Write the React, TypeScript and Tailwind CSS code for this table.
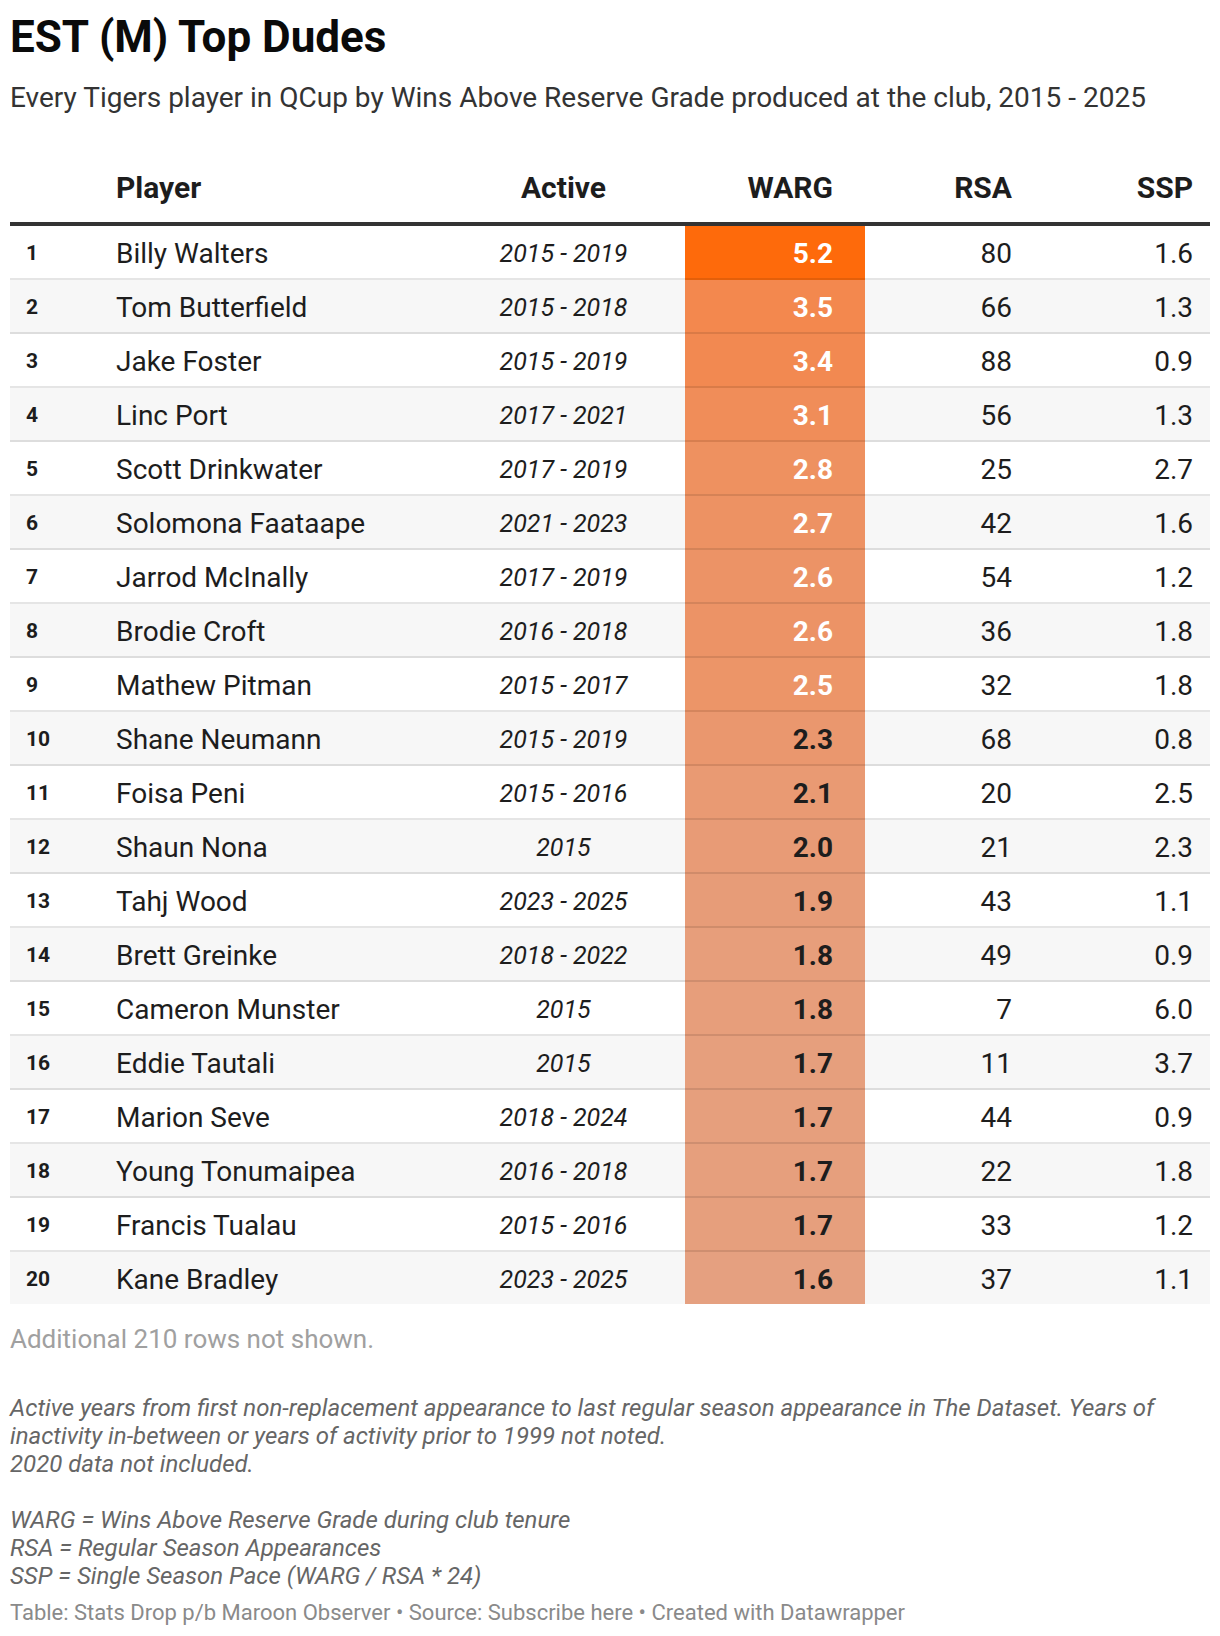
import React from "react";

type Row = {
  rank: number;
  name: string;
  active: string;
  warg: string;
  rsa: number;
  ssp: string;
  heat: string;
  light: boolean;
};

// Heat colours sampled from the reference, light text on the darker cells.
const ROWS: Row[] = [
  { rank: 1, name: "Billy Walters", active: "2015 - 2019", warg: "5.2", rsa: 80, ssp: "1.6", heat: "bg-[#fe6a0b]", light: true },
  { rank: 2, name: "Tom Butterfield", active: "2015 - 2018", warg: "3.5", rsa: 66, ssp: "1.3", heat: "bg-[#f3884e]", light: true },
  { rank: 3, name: "Jake Foster", active: "2015 - 2019", warg: "3.4", rsa: 88, ssp: "0.9", heat: "bg-[#f28951]", light: true },
  { rank: 4, name: "Linc Port", active: "2017 - 2021", warg: "3.1", rsa: 56, ssp: "1.3", heat: "bg-[#f08d59]", light: true },
  { rank: 5, name: "Scott Drinkwater", active: "2017 - 2019", warg: "2.8", rsa: 25, ssp: "2.7", heat: "bg-[#ee9160]", light: true },
  { rank: 6, name: "Solomona Faataape", active: "2021 - 2023", warg: "2.7", rsa: 42, ssp: "1.6", heat: "bg-[#ed9263]", light: true },
  { rank: 7, name: "Jarrod McInally", active: "2017 - 2019", warg: "2.6", rsa: 54, ssp: "1.2", heat: "bg-[#ec9366]", light: true },
  { rank: 8, name: "Brodie Croft", active: "2016 - 2018", warg: "2.6", rsa: 36, ssp: "1.8", heat: "bg-[#ec9366]", light: true },
  { rank: 9, name: "Mathew Pitman", active: "2015 - 2017", warg: "2.5", rsa: 32, ssp: "1.8", heat: "bg-[#ec9568]", light: true },
  { rank: 10, name: "Shane Neumann", active: "2015 - 2019", warg: "2.3", rsa: 68, ssp: "0.8", heat: "bg-[#ea976e]", light: false },
  { rank: 11, name: "Foisa Peni", active: "2015 - 2016", warg: "2.1", rsa: 20, ssp: "2.5", heat: "bg-[#e99a73]", light: false },
  { rank: 12, name: "Shaun Nona", active: "2015", warg: "2.0", rsa: 21, ssp: "2.3", heat: "bg-[#e89b76]", light: false },
  { rank: 13, name: "Tahj Wood", active: "2023 - 2025", warg: "1.9", rsa: 43, ssp: "1.1", heat: "bg-[#e79c78]", light: false },
  { rank: 14, name: "Brett Greinke", active: "2018 - 2022", warg: "1.8", rsa: 49, ssp: "0.9", heat: "bg-[#e79e7b]", light: false },
  { rank: 15, name: "Cameron Munster", active: "2015", warg: "1.8", rsa: 7, ssp: "6.0", heat: "bg-[#e79e7b]", light: false },
  { rank: 16, name: "Eddie Tautali", active: "2015", warg: "1.7", rsa: 11, ssp: "3.7", heat: "bg-[#e69f7d]", light: false },
  { rank: 17, name: "Marion Seve", active: "2018 - 2024", warg: "1.7", rsa: 44, ssp: "0.9", heat: "bg-[#e69f7d]", light: false },
  { rank: 18, name: "Young Tonumaipea", active: "2016 - 2018", warg: "1.7", rsa: 22, ssp: "1.8", heat: "bg-[#e69f7d]", light: false },
  { rank: 19, name: "Francis Tualau", active: "2015 - 2016", warg: "1.7", rsa: 33, ssp: "1.2", heat: "bg-[#e69f7d]", light: false },
  { rank: 20, name: "Kane Bradley", active: "2023 - 2025", warg: "1.6", rsa: 37, ssp: "1.1", heat: "bg-[#e5a080]", light: false },
];

function TableRow({ row, last }: { row: Row; last: boolean }) {
  // text sits a touch below centre in the original, hence the pt
  const cell = `flex items-center pt-[4px] ${last ? "" : "border-b-2 border-black/10"}`;
  return (
    <div className={`flex ${last ? "h-[52px]" : "h-[54px]"} ${row.rank % 2 === 0 ? "bg-[#f7f7f7]" : "bg-white"}`}>
      <div className={`${cell} w-[96px] pl-[16px] text-[21px] font-bold text-[#1d1d1d]`}>{row.rank}</div>
      <div className={`${cell} w-[336px] pl-[10px] text-[28px] text-[#1d1d1d]`}>{row.name}</div>
      <div className={`${cell} w-[243px] justify-center text-[25px] italic text-[#1d1d1d]`}>{row.active}</div>
      <div
        className={`${cell} w-[180px] justify-end pr-[32px] text-[28px] font-bold ${row.heat} ${
          row.light ? "text-white" : "text-[#1d1d1d]"
        }`}
      >
        {row.warg}
      </div>
      <div className={`${cell} w-[164px] justify-end pr-[17px] text-[28px] text-[#1d1d1d]`}>{row.rsa}</div>
      <div className={`${cell} w-[181px] justify-end pr-[17px] text-[28px] text-[#1d1d1d]`}>{row.ssp}</div>
    </div>
  );
}

export default function App() {
  return (
    <div className="min-h-[1636px] w-[1220px] bg-white px-[10px] pt-[11px] font-['Roboto',sans-serif]">
      <h1 className="text-[44px] font-bold leading-[52px] text-[#0a0a0a]">EST (M) Top Dudes</h1>
      <p className="mt-[18px] text-[28px] leading-[34px] text-[#333]">
        Every Tigers player in QCup by Wins Above Reserve Grade produced at the club, 2015 - 2025
      </p>

      <div className="mt-[53px]">
        <div className="flex border-b-4 border-[#333] pb-[14px] text-[30px] font-bold leading-[40px] text-[#1d1d1d]">
          <div className="w-[96px]" />
          <div className="w-[336px] pl-[10px]">Player</div>
          <div className="w-[243px] text-center">Active</div>
          <div className="w-[180px] pr-[32px] text-right">WARG</div>
          <div className="w-[164px] pr-[17px] text-right">RSA</div>
          <div className="w-[181px] pr-[17px] text-right">SSP</div>
        </div>
        {ROWS.map((r, i) => (
          <TableRow key={r.rank} row={r} last={i === ROWS.length - 1} />
        ))}
      </div>

      <p className="mt-[17px] text-[26px] leading-[36px] text-[#a0a0a0]">Additional 210 rows not shown.</p>

      <p className="mt-[37px] text-[24px] italic leading-[28px] text-[#666]">
        Active years from first non-replacement appearance to last regular season appearance in The Dataset. Years of
        inactivity in-between or years of activity prior to 1999 not noted.
        <br />
        2020 data not included.
        <br />
        <br />
        WARG = Wins Above Reserve Grade during club tenure
        <br />
        RSA = Regular Season Appearances
        <br />
        SSP = Single Season Pace (WARG / RSA * 24)
      </p>

      <p className="mt-[9px] text-[22px] leading-[28px] text-[#8a8a8a]">
        Table: Stats Drop p/b Maroon Observer • Source: Subscribe here • Created with Datawrapper
      </p>
    </div>
  );
}
